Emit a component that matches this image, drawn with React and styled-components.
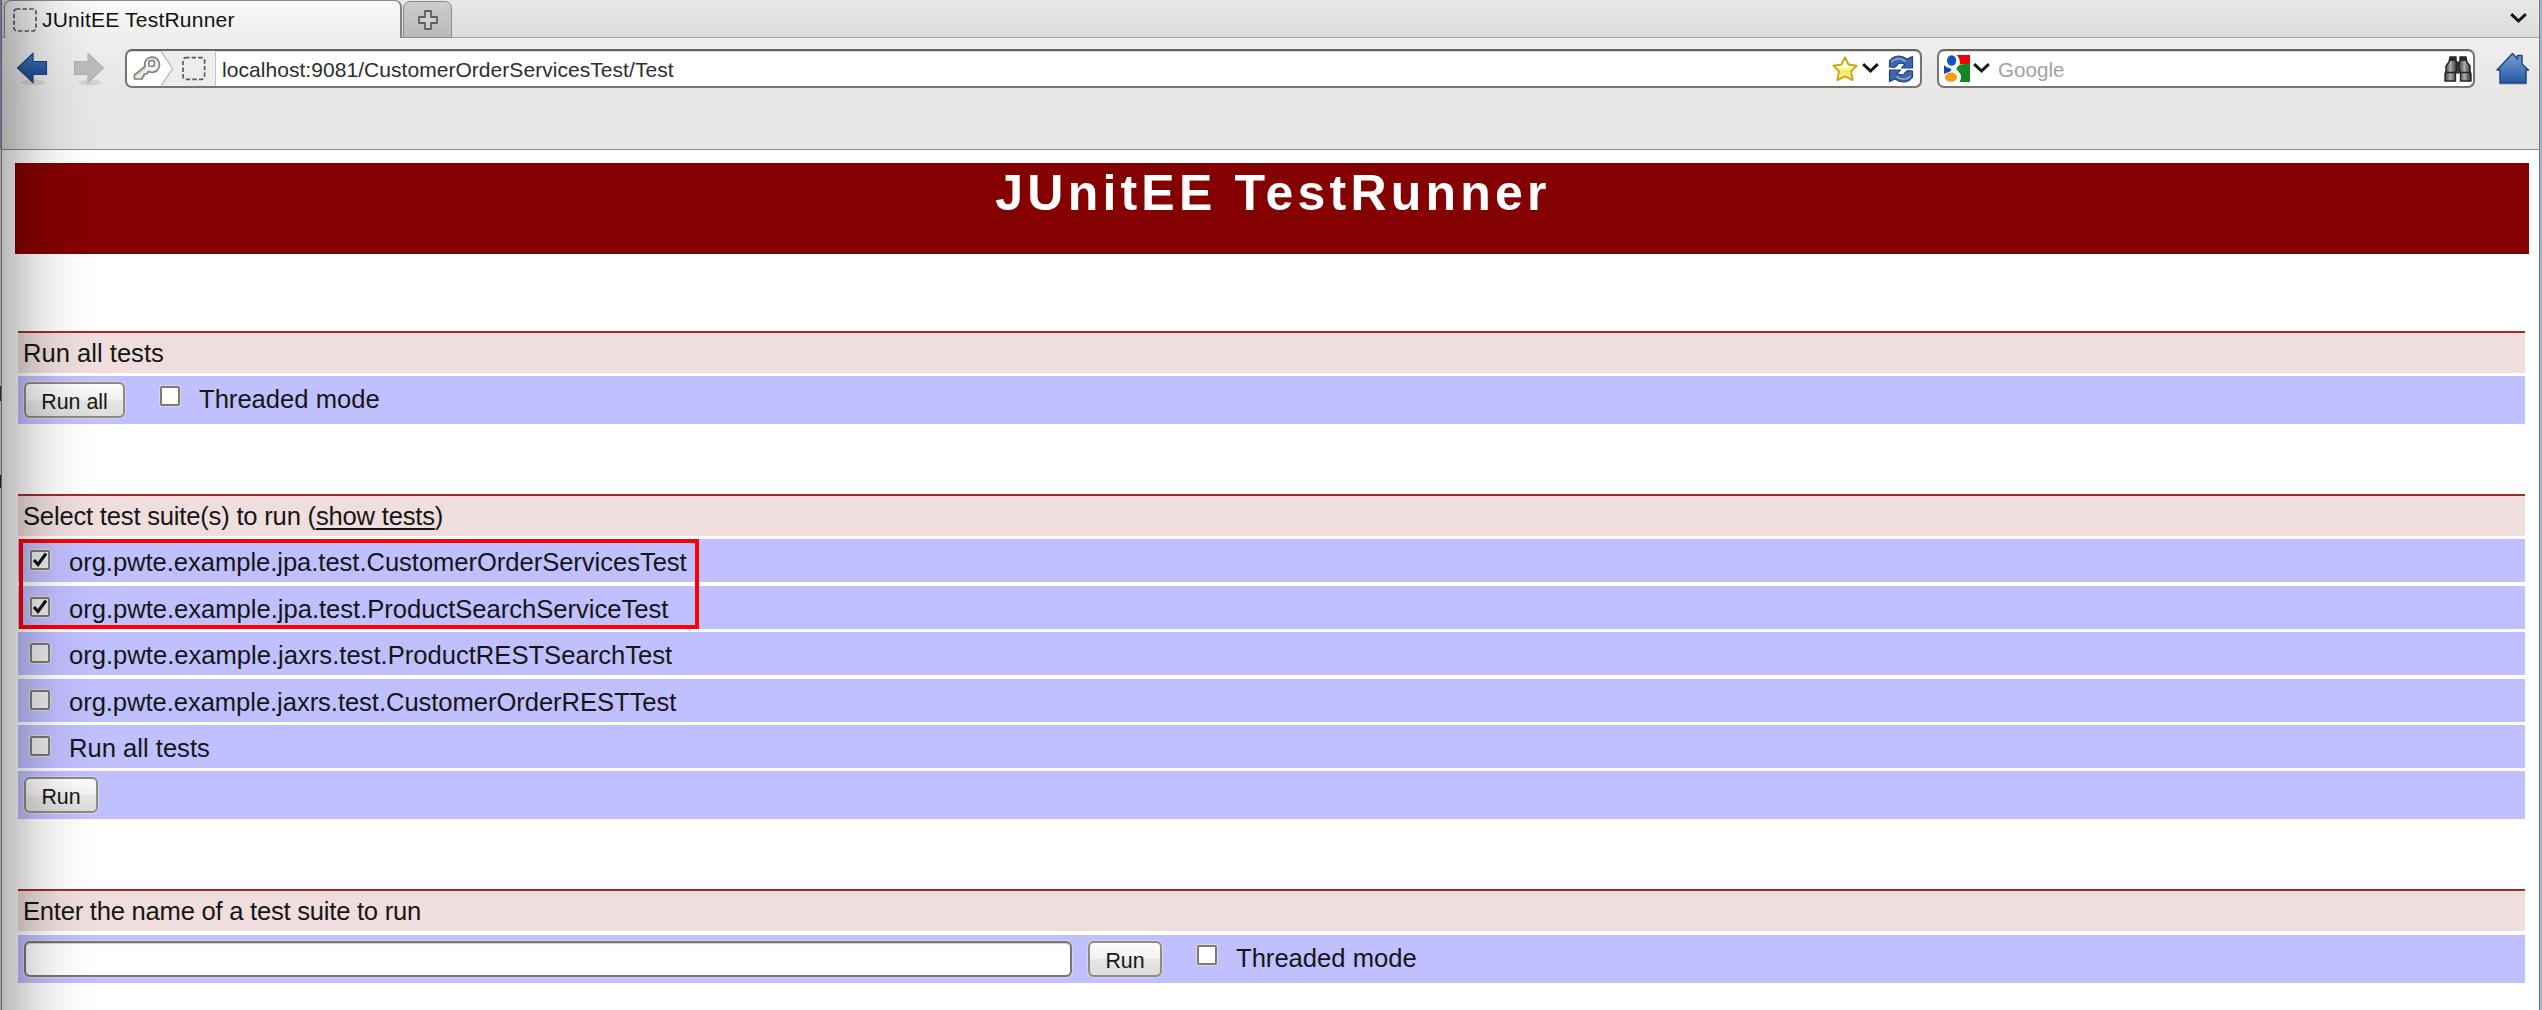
import React from "react";
import styled, { createGlobalStyle } from "styled-components";

const GlobalStyle = createGlobalStyle`
  * { box-sizing: border-box; }
  html, body { margin: 0; padding: 0; background: #fff; }
  body {
    width: 2542px;
    height: 1010px;
    overflow: hidden;
    font-family: "Liberation Sans", Arial, sans-serif;
    color: #161616;
  }
`;

const Window = styled.div`
  position: relative;
  display: grid;
  grid-template-columns: 2px 1fr 3px;
  width: 2542px;
  height: 1010px;
  overflow: hidden;
  background: #fff;
`;

const LeftFrame = styled.div`
  border-right: 1px solid #5f5f5f;
  background: linear-gradient(#5c7896 0 149px, #a9a9a9 149px 386px, #2b2b2b 386px 401px, #a9a9a9 401px 475px, #1d1d1d 475px 488px, #a9a9a9 488px);
`;

const RightFrame = styled.div`
  border-left: 1px solid #6f7a85;
  background: #9fb4c8;
`;

const LeftShade = styled.div`
  position: absolute;
  left: 2px;
  top: 0;
  width: 96px;
  height: 100%;
  pointer-events: none;
  background: linear-gradient(
    to right,
    rgba(0, 0, 0, 0.27) 0,
    rgba(0, 0, 0, 0.2) 16px,
    rgba(0, 0, 0, 0.115) 34px,
    rgba(0, 0, 0, 0.05) 54px,
    rgba(0, 0, 0, 0.015) 76px,
    rgba(0, 0, 0, 0) 96px
  );
`;

const Content = styled.div`
  display: flex;
  flex-direction: column;
  min-width: 0;
`;

const TabBar = styled.div`
  display: flex;
  align-items: flex-end;
  height: 38px;
  padding-left: 2px;
  background: linear-gradient(#e9e8e7, #dddcdb);
  box-shadow: inset 0 -1px 0 #a5a3a0;
`;

const Tab = styled.div`
  display: flex;
  align-items: center;
  width: 398px;
  height: 38px;
  padding-left: 8px;
  gap: 5px;
  border: 1px solid #8f8d8a;
  border-right: 2px solid #85837f;
  border-bottom: 0;
  border-radius: 7px 7px 0 0;
  background: linear-gradient(#f9f9f9, #efeeed);
  font-size: 21px;
  color: #111;
`;

const TabTitle = styled.span`
  padding-top: 1px;
  line-height: 24px;
  letter-spacing: 0.22px;
`;

const NewTab = styled.div`
  display: flex;
  align-items: center;
  justify-content: center;
  width: 49px;
  height: 37px;
  margin-left: 1px;
  border: 1px solid #8f8d8a;
  border-radius: 7px 7px 0 0;
  background: linear-gradient(#cfcdcb, #bbb9b7);
`;

const TabListButton = styled.div`
  display: flex;
  margin: 0 12px 14px auto;
`;

const Toolbar = styled.div`
  display: flex;
  align-items: flex-start;
  height: 112px;
  padding: 11px 0 0 14px;
  background: linear-gradient(#f0efee 0, #e8e7e6 52px, #e7e6e4 100%);
  border-bottom: 1px solid #8f8d8b;
`;

const NavIcon = styled.div`
  display: flex;
  margin: 3px ${(p) => p.$right}px 0 0;
`;

const Field = styled.div`
  display: flex;
  align-items: center;
  width: ${(p) => p.$width}px;
  height: 39px;
  margin-right: ${(p) => p.$right}px;
  border: 2px solid #777572;
  border-top-color: #676562;
  border-radius: 7px;
  background: #fff;
  box-shadow: inset 0 1px 1px #d5d5d5;
  overflow: hidden;
`;

const Identity = styled.div`
  display: flex;
  align-items: center;
  width: 89px;
  height: 100%;
  padding-left: 6px;
  border-right: 1px solid #c4c3c2;
`;

const UrlText = styled.span`
  flex: 1;
  margin-left: 6px;
  padding-top: 2px;
  font-size: 21px;
  line-height: 24px;
  letter-spacing: 0.05px;
  color: #2e2e2e;
`;

const FieldIcons = styled.div`
  display: flex;
  align-items: center;
  gap: ${(p) => p.$gap || 0}px;
  padding: 0 ${(p) => p.$right || 0}px 0 ${(p) => p.$left || 0}px;
`;

const SearchHint = styled.span`
  flex: 1;
  margin-left: 8px;
  padding-top: 2px;
  font-size: 20.6px;
  line-height: 24px;
  color: #a5a19d;
`;

const Page = styled.div`
  display: flex;
  flex-direction: column;
  padding: 13px 10px 0 13px;
`;

const Banner = styled.h1`
  margin: 0 0 76.6px;
  height: 91px;
  padding: 1px 0 0 2px;
  background: #850000;
  color: #fff;
  font-size: 50px;
  line-height: 58px;
  font-weight: bold;
  letter-spacing: 4.2px;
  text-align: center;
`;

const Section = styled.section`
  position: relative;
  display: flex;
  flex-direction: column;
  gap: 3.4px;
  margin: 0 4px ${(p) => p.$after}px 3px;
`;

const SectionTitle = styled.div`
  height: 42px;
  padding: 4px 0 0 5px;
  border-top: 2px solid #a02a2e;
  background: #f0dede;
  font-size: 25.6px;
  line-height: 32px;
  letter-spacing: ${(p) => p.$spacing || 0}px;
`;

const Row = styled.div`
  display: flex;
  align-items: flex-start;
  height: ${(p) => (p.$tall ? 48 : 43)}px;
  padding: ${(p) => (p.$tall ? 6 : 5)}px 0 0 ${(p) => p.$inset || 6}px;
  background: #c0bfff;
  font-size: 25.6px;
  line-height: 36px;
`;

const RowLabel = styled.span`
  margin-top: ${(p) => (p.$tall ? -1 : 0)}px;
  letter-spacing: ${(p) => p.$spacing || 0}px;
  white-space: nowrap;
`;

const Check = styled.span`
  display: flex;
  align-items: center;
  justify-content: center;
  width: 20px;
  height: 20px;
  margin: ${(p) => p.$top}px 19px 0 ${(p) => p.$left || 0}px;
  border: 2px solid #7d7a77;
  border-radius: 2px;
  background: ${(p) => (p.$plain ? "#fff" : "#ebebeb")};
  box-shadow: 0 0 0 1px rgba(225, 222, 216, 0.8);
`;

const Button = styled.button`
  width: ${(p) => p.$width}px;
  height: 36px;
  padding: 4px 0 0;
  border: 2px solid #8d8a87;
  border-radius: 6px;
  background: linear-gradient(#fdfdfd, #f1f1f0 50%, #e6e6e4 52%, #dddddb);
  box-shadow: 0 0 0 1px rgba(225, 222, 216, 0.7);
  font-family: inherit;
  font-size: 21.4px;
  line-height: 28px;
  color: #161616;
`;

const SuiteInput = styled.input`
  width: 1048px;
  height: 36px;
  margin-right: 16px;
  border: 2px solid #777572;
  border-radius: 6px;
  background: #fff;
  box-shadow: inset 0 1px 1px #ccc, 0 0 0 1px rgba(225, 222, 216, 0.7);
`;

const Link = styled.a`
  text-decoration: underline;
  text-decoration-thickness: 2px;
  text-underline-offset: 3px;
`;

const Highlight = styled.div`
  position: absolute;
  left: 1px;
  top: 45px;
  width: 680px;
  height: 90px;
  border: 4px solid #ff0000;
`;

const Placeholder = () => (
  <svg width="24" height="24" viewBox="0 0 24 24" fill="none">
    <rect x="1" y="1" width="22" height="22" rx="3" stroke="#5b5b5b" strokeWidth="1.7" strokeDasharray="4.4 2.2" strokeDashoffset="1" />
  </svg>
);

const Caret = () => (
  <svg width="17" height="11" viewBox="0 0 17 11" fill="none">
    <path d="M1.2 1.2 L8.500 8 L15.800 1.2" stroke="#161616" strokeWidth="3" />
  </svg>
);

const Plus = () => (
  <svg width="22" height="22" viewBox="0 0 22 22">
    <path d="M8 2H14V8H20V14H14V20H8V14H2V8H8Z" fill="#d2d0ce" stroke="#62605d" strokeWidth="1.8" strokeLinejoin="round" />
  </svg>
);

const Arrow = ({ forward }) => (
  <svg width="32" height="35" viewBox="0 0 32 35">
    <defs>
      <linearGradient id="arrowBlue" x1="0" y1="0" x2="0" y2="1">
        <stop offset="0" stopColor="#4a7cc0" />
        <stop offset="0.5" stopColor="#2a5aa2" />
        <stop offset="1" stopColor="#1d4788" />
      </linearGradient>
    </defs>
    <ellipse cx="17" cy="30.5" rx="12" ry="3" fill="#000" opacity="0.09" />
    <g transform={forward ? "translate(32 0) scale(-1 1)" : undefined}>
      <path
        d="M1.5 16 L17 1.5 V9.5 H30.5 V22.5 H17 V30.5 Z"
        fill={forward ? "#b9bbbd" : "url(#arrowBlue)"}
        stroke={forward ? "#b0b2b4" : "#1c4583"}
        strokeWidth="1.2"
      />
    </g>
  </svg>
);

const Key = () => (
  <svg width="28" height="25" viewBox="0 0 28 25">
    <path
      d="M12 10.5 C10.5 5 14.5 1.2 19 1.2 C23.5 1.2 26.5 4.5 26.5 8.8 C26.5 13.5 22.5 16.8 18 16.2 L15.5 15.6 L13.5 18 L11 18 L10.8 20.5 L9.5 21 L9.3 23 L1.5 23 L1.5 19 Z"
      fill="#efeeeb" stroke="#85837d" strokeWidth="1.7" strokeLinejoin="round"
    />
    <path d="M3 19.5 L12.5 12" stroke="#c9c8c3" strokeWidth="1.3" />
    <rect x="15.8" y="4.6" width="5.6" height="5.6" rx="1.8" fill="#fff" stroke="#85837d" strokeWidth="1.6" />
  </svg>
);

const Chevron = () => (
  <svg width="54" height="35" viewBox="0 0 54 35">
    <path d="M0 0 H54 V35 H0 L11.5 17.5 Z" fill="#eeedec" />
    <path d="M0 0 L11.5 17.5 L0 35" fill="none" stroke="#bcbbba" strokeWidth="1.3" />
    <rect x="22" y="6.700" width="21.6" height="21.6" rx="3" fill="none" stroke="#5b5b5b" strokeWidth="1.7" strokeDasharray="4.4 2.2" strokeDashoffset="1" />
  </svg>
);

const Star = () => (
  <svg width="26" height="26" viewBox="0 0 26 26">
    <defs>
      <linearGradient id="starFill" x1="0" y1="0" x2="0" y2="1">
        <stop offset="0" stopColor="#fff" />
        <stop offset="0.45" stopColor="#fffbd0" />
        <stop offset="0.6" stopColor="#f8e75a" />
        <stop offset="1" stopColor="#fdf6b0" />
      </linearGradient>
    </defs>
    <path
      d="M13 1.5 L16.6 8.6 L24.5 9.8 L19 15.4 L20.6 24 L13 20.4 L5.4 24 L7 15.4 L1.5 9.8 L9.4 8.6 Z"
      fill="url(#starFill)" stroke="#cba71e" strokeWidth="2" strokeLinejoin="round"
    />
  </svg>
);

const Reload = () => (
  <svg width="26" height="28" viewBox="0 0 26 28">
    <g fill="#4068a8" stroke="#1e4484" strokeWidth="1.2" strokeLinejoin="round">
      <path d="M1.500 12 V6 L5 2.500 C9 0.300 14 0.500 19 4 L24.500 1.500 V13 H13.500 L17 9.500 C13.500 7.200 9.500 8 9 10.500 L6 12.500 Z" />
      <path d="M24.500 16 V22 L21 25.500 C17 27.700 12 27.500 7 24 L1.500 26.500 V15 H12.500 L9 18.500 C12.500 20.800 16.500 20 17 17.500 L20 15.500 Z" />
    </g>
    <path d="M3.500 7 C7 3 13 2.500 17.500 6.500" fill="none" stroke="#8aa8d3" strokeWidth="1.700" />
    <path d="M22.500 21 C19 25 13 25.500 8.500 21.500" fill="none" stroke="#8aa8d3" strokeWidth="1.700" />
  </svg>
);

const SearchEngine = () => (
  <svg width="26" height="27" viewBox="0 0 26 27">
    <path d="M12.500 0 H26 V9 H16 C16 5 15 2 12.500 0 Z" fill="#f40000" />
    <path d="M26 8.500 V27 H15.500 C18.500 22 17 18.500 13 15 C11.500 13.500 13.500 11.500 16 9.500 Z" fill="#0d8a22" />
    <path d="M0 10 C2.500 13 6 12.500 7.500 14.500 C7 17 3 17.500 0 19 Z" fill="#1247b8" />
    <ellipse cx="7.600" cy="5.500" rx="4.600" ry="5.300" fill="#1450c4" />
    <ellipse cx="7" cy="22.200" rx="6" ry="4.600" fill="#f2a10a" />
  </svg>
);

const Binoculars = () => (
  <svg width="28" height="26" viewBox="0 0 28 26">
    <defs>
      <linearGradient id="tube" x1="0" y1="0" x2="1" y2="0">
        <stop offset="0" stopColor="#3b3d3b" />
        <stop offset="0.45" stopColor="#a9aca8" />
        <stop offset="1" stopColor="#2b2d2b" />
      </linearGradient>
    </defs>
    <rect x="10" y="6" width="8" height="11" rx="2" fill="#4c4f4c" stroke="#1d1f1d" />
    <path d="M6 1 H12 V5 L13 8 V14 L11.500 16 V25 H1 V18 L2 15 V10 L5 6 Z" fill="url(#tube)" stroke="#222422" strokeWidth="1.400" />
    <path d="M22 1 H16 V5 L15 8 V14 L16.500 16 V25 H27 V18 L26 15 V10 L23 6 Z" fill="url(#tube)" stroke="#222422" strokeWidth="1.400" />
    <path d="M6 1 H12 V5 H6 Z M16 1 H22 V5 H16 Z" fill="#2a2c2a" />
    <path d="M1.500 16.500 H12 M16 16.500 H26.500" stroke="#222422" strokeWidth="1.500" />
  </svg>
);

const Home = () => (
  <svg width="34" height="34" viewBox="0 0 34 34">
    <defs>
      <linearGradient id="houseFill" x1="0" y1="0" x2="0" y2="1">
        <stop offset="0" stopColor="#7ba0d2" />
        <stop offset="1" stopColor="#2459a5" />
      </linearGradient>
    </defs>
    <rect x="3" y="30" width="28" height="3" rx="1.500" fill="#000" opacity="0.150" />
    <path
      d="M16.500 1.500 L21.500 7 V3.500 H26 V12 L32.500 18 H30 V31 H4 V18 H1 Z"
      fill="url(#houseFill)" stroke="#1d4687" strokeWidth="1.500" strokeLinejoin="round"
    />
  </svg>
);

const Tick = () => (
  <svg width="16" height="16" viewBox="0 0 16 16" fill="none">
    <path d="M2 8 L6 12.500 L14 1.500" stroke="#111" strokeWidth="3" />
  </svg>
);

const suites = [
  { name: "org.pwte.example.jpa.test.CustomerOrderServicesTest", checked: true, spacing: -0.05 },
  { name: "org.pwte.example.jpa.test.ProductSearchServiceTest", checked: true, spacing: -0.02 },
  { name: "org.pwte.example.jaxrs.test.ProductRESTSearchTest", checked: false, spacing: 0 },
  { name: "org.pwte.example.jaxrs.test.CustomerOrderRESTTest", checked: false, spacing: -0.06 },
  { name: "Run all tests", checked: false, spacing: 0 },
];

export default function App() {
  return (
    <Window>
      <GlobalStyle />
      <LeftFrame />
      <Content>
        <TabBar>
          <Tab>
            <Placeholder />
            <TabTitle>JUnitEE TestRunner</TabTitle>
          </Tab>
          <NewTab><Plus /></NewTab>
          <TabListButton><Caret /></TabListButton>
        </TabBar>
        <Toolbar>
          <NavIcon $right={25}><Arrow /></NavIcon>
          <NavIcon $right={20}><Arrow forward /></NavIcon>
          <Field $width={1797} $right={15}>
            <Identity>
              <Key />
              <Chevron />
            </Identity>
            <UrlText>localhost:9081/CustomerOrderServicesTest/Test</UrlText>
            <FieldIcons $gap={4}>
              <Star />
              <Caret />
            </FieldIcons>
            <FieldIcons $left={9} $right={6}><Reload /></FieldIcons>
          </Field>
          <Field $width={538} $right={21}>
            <FieldIcons $gap={3} $left={5}>
              <SearchEngine />
              <Caret />
            </FieldIcons>
            <SearchHint>Google</SearchHint>
            <FieldIcons $right={1}><Binoculars /></FieldIcons>
          </Field>
          <NavIcon $right={0}><Home /></NavIcon>
        </Toolbar>
        <Page>
          <Banner>JUnitEE TestRunner</Banner>
          <Section $after={70}>
            <SectionTitle>Run all tests</SectionTitle>
            <Row $tall>
              <Button $width={101}>Run all</Button>
              <Check $plain $top={4} $left={35} />
              <RowLabel $tall>Threaded mode</RowLabel>
            </Row>
          </Section>
          <Section $after={70}>
            <SectionTitle $spacing={-0.2}>
              Select test suite(s) to run (<Link>show tests</Link>)
            </SectionTitle>
            {suites.map((s) => (
              <Row key={s.name} $inset={12}>
                <Check $top={6}>{s.checked && <Tick />}</Check>
                <RowLabel $spacing={s.spacing}>{s.name}</RowLabel>
              </Row>
            ))}
            <Row $tall>
              <Button $width={74}>Run</Button>
            </Row>
            <Highlight />
          </Section>
          <Section $after={0}>
            <SectionTitle $spacing={-0.24}>Enter the name of a test suite to run</SectionTitle>
            <Row $tall>
              <SuiteInput />
              <Button $width={74}>Run</Button>
              <Check $plain $top={4} $left={35} />
              <RowLabel $tall>Threaded mode</RowLabel>
            </Row>
          </Section>
        </Page>
      </Content>
      <RightFrame />
      <LeftShade />
    </Window>
  );
}
